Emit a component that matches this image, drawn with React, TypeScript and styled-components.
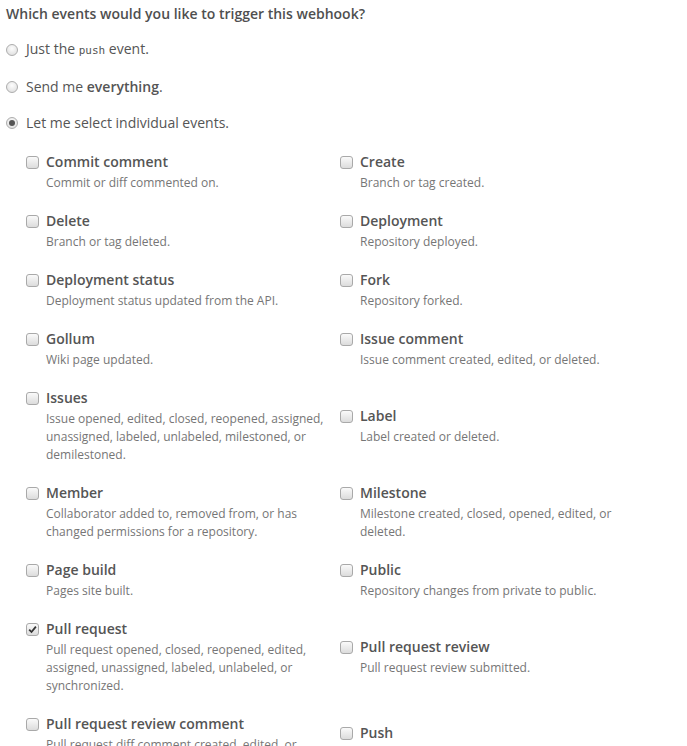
import React from 'react';
import styled, { createGlobalStyle } from 'styled-components';

const GlobalStyle = createGlobalStyle`
  body {
    margin: 0;
    background: #fff;
    font-family: "Open Sans", "Liberation Sans", sans-serif;
    color: #555;
  }
`;

const Page = styled.div`
  padding: 5px 6px 0;
  width: 687px;
  height: 746px;
  overflow: hidden;
  box-sizing: border-box;
`;

const Heading = styled.h5`
  margin: 0 0 16px;
  font-size: 14px;
  line-height: 18px;
  font-weight: 600;
  color: #4f4f4f;
`;

const RadioList = styled.div`
  display: flex;
  flex-direction: column;
  gap: 16px;
  margin-bottom: 19px;
`;

const RadioRow = styled.label`
  display: flex;
  align-items: center;
  gap: 8px;
  font-size: 14px;
  line-height: 20px;
  color: #555;
`;

const RadioDot = styled.span<{ $checked?: boolean }>`
  width: 12px;
  height: 12px;
  box-sizing: border-box;
  border-radius: 50%;
  border: 1px solid #adadad;
  background: radial-gradient(circle at 50% 35%, #fdfdfd, #dadada);
  display: flex;
  align-items: center;
  justify-content: center;
  &::after {
    content: '';
    display: ${p => (p.$checked ? 'block' : 'none')};
    width: 6px;
    height: 6px;
    border-radius: 50%;
    background: #555;
  }
`;

const Code = styled.code`
  font-family: "DejaVu Sans Mono", "Liberation Mono", monospace;
  font-size: 11px;
`;

const Strong = styled.b`
  font-weight: 600;
`;

const Events = styled.div`
  display: grid;
  grid-template-columns: 314px 314px;
  align-items: center;
  row-gap: 19px;
  padding-left: 20px;
`;

const Event = styled.label`
  display: flex;
  align-items: flex-start;
  gap: 7px;
`;

const Box = styled.span<{ $checked?: boolean }>`
  flex: none;
  width: 13px;
  height: 13px;
  margin-top: 4px;
  box-sizing: border-box;
  border: 1px solid #a9a9a9;
  border-radius: 3px;
  background: linear-gradient(#fafafa, #dcdcdc);
  display: flex;
  align-items: center;
  justify-content: center;
`;

const EventText = styled.div`
  display: flex;
  flex-direction: column;
`;

const Title = styled.span`
  font-size: 14px;
  line-height: 20px;
  padding-bottom: 2px;
  font-weight: 600;
  color: #555;
`;

const Note = styled.span`
  font-size: 12px;
  line-height: 18px;
  color: #767676;
`;

type EventItem = { title: string; note: string; checked?: boolean };

const events: EventItem[] = [
  { title: 'Commit comment', note: 'Commit or diff commented on.' },
  { title: 'Create', note: 'Branch or tag created.' },
  { title: 'Delete', note: 'Branch or tag deleted.' },
  { title: 'Deployment', note: 'Repository deployed.' },
  { title: 'Deployment status', note: 'Deployment status updated from the API.' },
  { title: 'Fork', note: 'Repository forked.' },
  { title: 'Gollum', note: 'Wiki page updated.' },
  { title: 'Issue comment', note: 'Issue comment created, edited, or deleted.' },
  {
    title: 'Issues',
    note: 'Issue opened, edited, closed, reopened, assigned, unassigned, labeled, unlabeled, milestoned, or demilestoned.',
  },
  { title: 'Label', note: 'Label created or deleted.' },
  {
    title: 'Member',
    note: 'Collaborator added to, removed from, or has changed permissions for a repository.',
  },
  { title: 'Milestone', note: 'Milestone created, closed, opened, edited, or deleted.' },
  { title: 'Page build', note: 'Pages site built.' },
  { title: 'Public', note: 'Repository changes from private to public.' },
  {
    title: 'Pull request',
    note: 'Pull request opened, closed, reopened, edited, assigned, unassigned, labeled, unlabeled, or synchronized.',
    checked: true,
  },
  { title: 'Pull request review', note: 'Pull request review submitted.' },
  {
    title: 'Pull request review comment',
    note: 'Pull request diff comment created, edited, or deleted.',
  },
  { title: 'Push', note: 'Git push to a repository.' },
];

const Check = () => (
  <svg width="9" height="9" viewBox="0 0 9 9">
    <path d="M1.2 4.6 L3.5 7 L7.9 1.6" fill="none" stroke="#333" strokeWidth="1.8" />
  </svg>
);

const App: React.FC = () => (
  <Page>
    <GlobalStyle />
    <Heading>Which events would you like to trigger this webhook?</Heading>
    <RadioList>
      <RadioRow>
        <RadioDot />
        <span>
          Just the <Code>push</Code> event.
        </span>
      </RadioRow>
      <RadioRow>
        <RadioDot />
        <span>
          Send me <Strong>everything</Strong>.
        </span>
      </RadioRow>
      <RadioRow>
        <RadioDot $checked />
        <span>Let me select individual events.</span>
      </RadioRow>
    </RadioList>
    <Events>
      {events.map(e => (
        <Event key={e.title}>
          <Box $checked={e.checked}>{e.checked && <Check />}</Box>
          <EventText>
            <Title>{e.title}</Title>
            <Note>{e.note}</Note>
          </EventText>
        </Event>
      ))}
    </Events>
  </Page>
);

export default App;
